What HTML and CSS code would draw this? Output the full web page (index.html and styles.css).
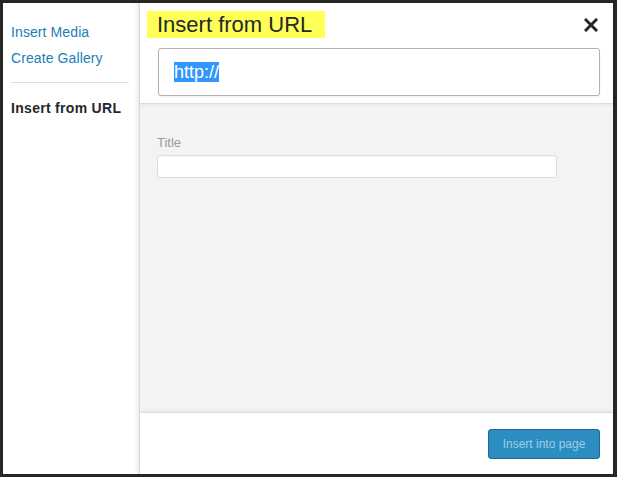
FILE: index.html
```html
<!DOCTYPE html>
<html>
<head>
<meta charset="utf-8">
<link rel="stylesheet" href="styles.css">
</head>
<body>
<div class="frame">
  <nav class="sidebar">
    <a class="nav-link" href="#">Insert Media</a>
    <a class="nav-link" href="#">Create Gallery</a>
    <div class="separator"></div>
    <div class="nav-current">Insert from URL</div>
  </nav>
  <main class="main">
    <header class="header">
      <div class="title-row">
        <h1 class="title">Insert from URL</h1>
        <button class="close" aria-label="Close">
          <svg width="14" height="14" viewBox="0 0 14 14"><path d="M2 2 L12 12 M12 2 L2 12" stroke="#23282d" stroke-width="3" stroke-linecap="square"/></svg>
        </button>
      </div>
      <div class="url-box"><span class="sel">http://</span></div>
    </header>
    <section class="content">
      <label class="label">Title</label>
      <div class="text-input"></div>
    </section>
    <footer class="footer">
      <button class="btn-primary">Insert into page</button>
    </footer>
  </main>
</div>
</body>
</html>
```

FILE: styles.css
```css
html, body {
  margin: 0;
  padding: 0;
  background: #262626;
}
body {
  font-family: "Liberation Sans", Arial, sans-serif;
  width: 617px;
  height: 477px;
  overflow: hidden;
}
.frame {
  display: flex;
  box-sizing: border-box;
  width: 617px;
  height: 477px;
  border-style: solid;
  border-color: #262626;
  border-width: 3px 4px 3px 3px;
  background: #fff;
}
.sidebar {
  box-sizing: border-box;
  width: 137px;
  flex: none;
  display: flex;
  flex-direction: column;
  padding: 21px 0 0 8px;
  background: #fff;
  border-right: 1px solid #dcdcdc;
  box-shadow: inset -5px 0 5px -4px rgba(0, 0, 0, 0.12);
}
.nav-link {
  color: #2180b5;
  text-decoration: none;
  font-size: 14px;
  line-height: 16px;
  margin-bottom: 10px;
  letter-spacing: 0.1px;
}
.separator {
  width: 118px;
  height: 1px;
  background: #dcdcdc;
  margin: 6px 0 17px;
}
.nav-current {
  color: #23282d;
  font-size: 14px;
  font-weight: bold;
  line-height: 16px;
  letter-spacing: 0.3px;
}
.main {
  flex: 1;
  display: flex;
  flex-direction: column;
  min-width: 0;
}
.header {
  height: 101px;
  box-sizing: border-box;
  padding: 8px 13px 0 7px;
  background: #fff;
  border-bottom: 1px solid #dedede;
  box-shadow: 0 1px 3px rgba(0, 0, 0, 0.06);
  position: relative;
  z-index: 1;
}
.title-row {
  display: flex;
  justify-content: space-between;
  align-items: flex-start;
}
.title {
  margin: 0;
  font-size: 22px;
  font-weight: normal;
  line-height: 27px;
  color: #23282d;
  background: #ffff55;
  padding: 0 13px 0 10px;
}
.close {
  border: 0;
  background: none;
  padding: 0;
  margin: 7px 2px 0 0;
  width: 14px;
  height: 14px;
  display: flex;
}
.url-box {
  box-sizing: border-box;
  margin: 10px 0 0 11px;
  height: 48px;
  border: 1px solid #b0b0b0;
  border-radius: 3px;
  box-shadow: 0 1px 2px rgba(0, 0, 0, 0.07);
  padding: 13px 0 0 15px;
  font-size: 18px;
  line-height: 20px;
  background: #fff;
}
.sel {
  background: #3297fd;
  color: #fff;
  display: inline-block;
}
.content {
  flex: 1;
  background: #f3f3f3;
  padding: 31px 0 0 17px;
  display: flex;
  flex-direction: column;
}
.label {
  font-size: 13px;
  line-height: 15px;
  color: #a09aa6;
  margin-bottom: 5px;
}
.text-input {
  box-sizing: border-box;
  width: 400px;
  height: 23px;
  background: #fff;
  border: 1px solid #dddddd;
  border-radius: 3px;
  box-shadow: inset 0 1px 2px rgba(0, 0, 0, 0.04);
}
.footer {
  height: 62px;
  box-sizing: border-box;
  border-top: 1px solid #dddddd;
  box-shadow: 0 -1px 3px rgba(0, 0, 0, 0.06);
  background: #fff;
  display: flex;
  justify-content: flex-end;
  align-items: flex-start;
  padding: 16px 13px 0 0;
  position: relative;
}
.btn-primary {
  box-sizing: border-box;
  width: 112px;
  height: 30px;
  background: #2c8dc0;
  border: 1px solid #1f6c98;
  border-radius: 3px;
  color: #9ccde9;
  font-family: "Liberation Sans", Arial, sans-serif;
  font-size: 12px;
  padding: 0;
}
```
